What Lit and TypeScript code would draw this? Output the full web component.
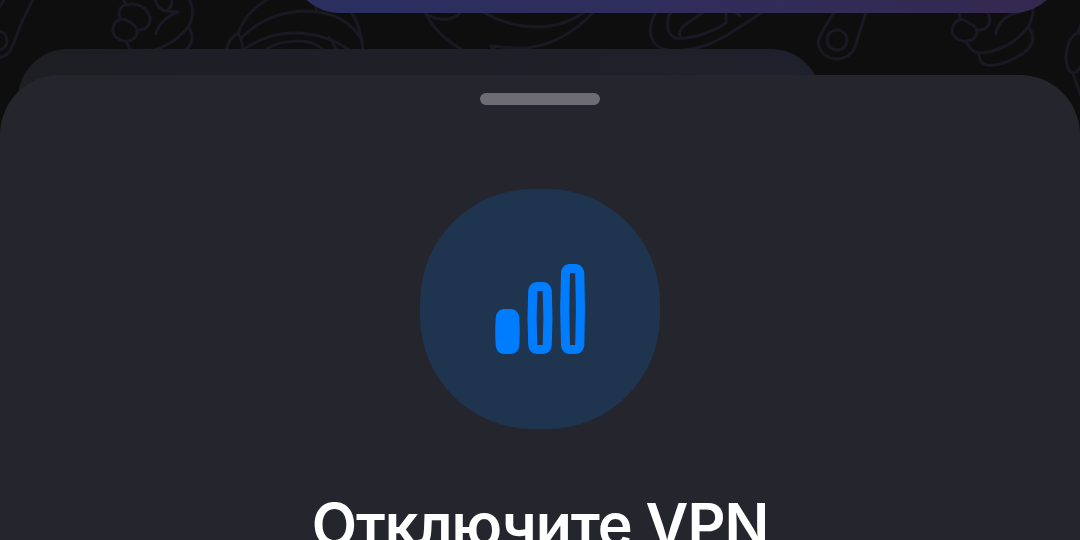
import { LitElement, html, css, svg } from "lit";
import { customElement, property } from "lit/decorators.js";

// outlines of the wallpaper doodles, in page pixels
const DOODLES = [
  // bone shapes on the left edge
  "M4 0L-2 9",
  "M33 0C23 17 18 31 13 45C10 53 5 57 -2 58",
  "M-2 31C4 31 7 36 7 41C7 46 3 50 -2 50",
  // fist
  "M123 -1L126 5M120 19C118 10 120 6 126 5C136 2 146 6 150 17C151 25 146 30 138 30",
  "M120 19C113 22 111 30 115 36C119 41 129 43 133 39C138 35 139 30 134 25C129 21 125 19 120 19",
  "M126 42L130 49C132 52 136 54 140 53C157 51 176 43 188 27C194 17 194 8 189 -1",
  "M155 -1C156 6 162 11 167 11C171 8 172 3 172 -1M165 11L178 12C167 16 158 24 156 34",
  "M189 28C196 39 190 48 181 53C170 60 157 66 146 65C139 64 136 60 136 54",
  // round head with stripes
  "M267 0C252 8 242 21 238 34C231 36 227 44 226 52",
  "M238 34C242 39 243 46 242 52M241 38C258 21 280 12 304 11C332 11 352 22 363 42",
  "M244 49C263 37 279 32 301 33C321 35 338 42 350 50",
  "M267 49C280 40 310 37 322 49M329 37C333 41 334 46 336 49M351 12C359 23 362 36 363 52",
  "M316 5L316 12",
  // leaf
  "M426 14C437 20 449 23 460 13M426 14C434 30 449 43 466 52",
  "M480 10C500 23 520 27 540 27C558 26 574 20 585 11M594 11C577 31 550 48 520 48C509 48 500 47 491 46L496 52",
  // paperclip
  "M656 12C648 25 648 40 659 47C671 54 690 50 707 45C728 37 745 23 763 12",
  "M671 12C664 24 668 34 675 38C692 40 714 31 726 23L726 12M680 36C677 25 694 21 703 12M734 11L740 16",
  // pin
  "M834 12L821 34C814 45 822 58 836 59C846 59 852 54 855 47L866 12",
  "M837 30A10 10 0 1 0 837 50A10 10 0 1 0 837 30",
  // second fist
  "M959 12L960 19C952 23 950 31 955 37C960 42 970 43 975 37C979 32 977 27 971 24C966 21 964 19 960 19",
  "M987 12C993 21 988 30 979 30M966 42C971 51 976 54 982 53C999 51 1016 43 1028 27C1032 20 1033 15 1033 9",
  "M1020 12C1005 15 997 24 996 34M1029 28C1037 39 1031 48 1022 54C1011 61 998 66 987 65C981 64 979 60 979 54",
  // partial doodle on the right edge
  "M1080 33C1073 32 1067 42 1066 56C1066 68 1070 74 1074 73C1078 72 1080 68 1082 64M1078 32L1082 22M1073 74L1082 99",
];

@customElement("chat-wallpaper")
export class ChatWallpaper extends LitElement {
  static styles = css`
    :host {
      display: block;
      background: #0e0e0e;
      overflow: hidden;
    }
    svg {
      display: block;
      fill: none;
      stroke: #1a1923;
      stroke-width: 3;
      stroke-linecap: round;
      stroke-linejoin: round;
    }
  `;

  render() {
    return html`<svg width="1080" height="140" viewBox="0 0 1080 140">
      ${DOODLES.map((d) => svg`<path d=${d} />`)}
    </svg>`;
  }
}

@customElement("signal-badge")
export class SignalBadge extends LitElement {
  static styles = css`
    :host {
      display: block;
      width: 240px;
      height: 240px;
      border-radius: 113px;
      background: #1f344e;
    }
    svg {
      display: block;
    }
    .bar {
      fill: #007cff;
      fill-rule: evenodd;
    }
  `;

  render() {
    return html`<svg width="240" height="240" viewBox="0 0 240 240">
      <path
        class="bar"
        d="M84 120H91C96 120 99 124 99.300 129Q100.200 142.500 99.300 156C99 161 96 165 91 165H84C79 165 76 161 75.700 156Q74.700 142.500 75.700 129C76 124 79 120 84 120Z"
      />
      <path
        class="bar"
        d="M117 93H123C128 93 131.500 97 131.800 102Q133.200 129 131.800 156C131.500 161 128 165 123 165H117C112 165 108.500 161 108.200 156Q106.800 129 108.200 102C108.500 97 112 93 117 93ZM117.300 102Q116 129 117.300 156H122.700Q124 129 122.700 102Z"
      />
      <path
        class="bar"
        d="M149.500 75H155.500C160.500 75 164 79 164.300 84Q165.700 120 164.300 156C164 161 160.500 165 155.500 165H149.500C144.500 165 141.200 161 141 156Q139.300 120 141 84C141.200 79 144.500 75 149.500 75ZM150 84Q148.500 120 150 156H155.200Q156.600 120 155.200 84Z"
      />
    </svg>`;
  }
}

@customElement("app-root")
export class AppRoot extends LitElement {
  static styles = css`
    :host {
      display: grid;
      width: 1080px;
      height: 540px;
      overflow: hidden;
      background: #0e0e0e;
      font-family: Inter, "Liberation Sans", sans-serif;
    }
    chat-wallpaper,
    .messages,
    .sheet {
      grid-area: 1 / 1;
      min-height: 0;
    }
    .messages {
      display: flex;
      flex-direction: column;
      gap: 36px;
      padding: 0 17px 0 18px;
    }
    .outgoing {
      align-self: flex-end;
      width: 773px;
      height: 13px;
      overflow: hidden;
      display: flex;
      align-items: flex-end;
    }
    .outgoing-fill {
      flex: 1;
      height: 120px;
      border-radius: 50px;
      background: linear-gradient(90deg, #292f60, #2f2d5b 48%, #34294f);
    }
    .incoming {
      width: 803px;
      height: 160px;
      border-radius: 50px;
      background: linear-gradient(90deg, #1d1f22, #1e1e26 18%, #1d2027 42%, #1f1f28 65%, #1e212c);
    }
    .sheet {
      display: flex;
      flex-direction: column;
      align-items: center;
      height: 465px;
      margin-top: 75px;
      border-radius: 60px 60px 0 0;
      background: #25262d;
      overflow: hidden;
      z-index: 1;
    }
    .handle {
      flex: none;
      width: 120px;
      height: 12px;
      margin-top: 18px;
      border-radius: 6px;
      background: #6c6c72;
    }
    signal-badge {
      flex: none;
      margin-top: 84px;
    }
    h1 {
      flex: none;
      margin: 60px 0 0;
      font-size: 59px;
      line-height: 72px;
      font-weight: 640;
      letter-spacing: -1px;
      white-space: nowrap;
      color: #fff;
    }
  `;

  @property() heading = "Отключите VPN";

  render() {
    return html`
      <chat-wallpaper></chat-wallpaper>
      <div class="messages">
        <div class="outgoing"><div class="outgoing-fill"></div></div>
        <div class="incoming"></div>
      </div>
      <section class="sheet">
        <div class="handle"></div>
        <signal-badge></signal-badge>
        <h1>${this.heading}</h1>
      </section>
    `;
  }
}
